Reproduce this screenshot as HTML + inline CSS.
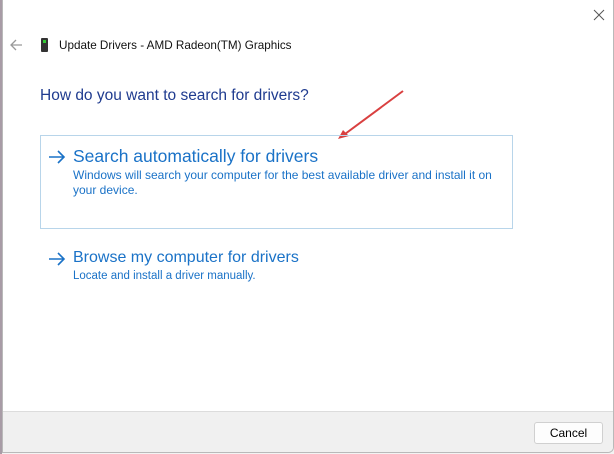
<!DOCTYPE html>
<html><head><style>
body{margin:0;width:614px;height:454px;background:#f3f3f3;position:relative;overflow:hidden;font-family:"Liberation Sans",sans-serif}
.win{position:absolute;left:2px;top:0;width:610px;height:452px;background:#fff;border:1px solid #b9b9b9;border-top:none;border-radius:0 0 6px 0;overflow:hidden}
.t{position:absolute;white-space:nowrap}
.foot{position:absolute;left:0;top:411px;width:610px;height:41px;background:#f0f0f0;border-top:1px solid #dcdcdc}
.btn{position:absolute;left:531px;top:10px;width:67px;height:20px;background:#fdfdfd;border:1px solid #d0d0d0;border-radius:3px;font-size:12px;text-align:center;line-height:20px;color:#000}
.box{position:absolute;left:37px;top:135px;width:471px;height:92px;border:1px solid #b8d5ea}
.lk{color:#1a72c7}
</style></head><body>
<div style="position:absolute;left:0;top:0;width:2px;height:454px;background:#a89ca6"></div>
<div class="win">
<svg style="position:absolute;left:590px;top:9px" width="12" height="12"><path d="M1 1L11 11M11 1L1 11" stroke="#555" stroke-width="1"/></svg>
<svg style="position:absolute;left:6px;top:38px" width="14" height="14"><path d="M13 7H2M7 2L2 7l5 5" stroke="#999" stroke-width="1.3" fill="none"/></svg>
<div style="position:absolute;left:38px;top:38px;width:7px;height:14px;background:#333;border-radius:1px"><div style="position:absolute;left:2px;top:2px;width:3px;height:3px;background:#3c3"></div></div>
<div class="t" style="left:56px;top:39px;font-size:11.7px;color:#111">Update Drivers - AMD Radeon(TM) Graphics</div>
<div class="t" style="left:37px;top:87px;font-size:15.5px;color:#1f3b8f">How do you want to search for drivers?</div>
<svg style="position:absolute;left:0;top:0" width="610" height="160"><line x1="400" y1="91" x2="342" y2="134" stroke="#d94040" stroke-width="2"/><path d="M335 139l5-9 6 6z" fill="#d94040"/></svg>
<div class="box"></div>
<svg style="position:absolute;left:45px;top:150px" width="18" height="14"><path d="M1 7H16M10 1l6 6-6 6" stroke="#1a72c7" stroke-width="1.6" fill="none"/></svg>
<div class="t lk" style="left:70px;top:146px;font-size:17.5px">Search automatically for drivers</div>
<div class="t lk" style="left:70px;top:168px;font-size:12px;line-height:15px">Windows will search your computer for the best available driver and install it on<br>your device.</div>
<svg style="position:absolute;left:45px;top:252px" width="18" height="14"><path d="M1 7H16M10 1l6 6-6 6" stroke="#1a72c7" stroke-width="1.6" fill="none"/></svg>
<div class="t lk" style="left:70px;top:249px;font-size:16px">Browse my computer for drivers</div>
<div class="t lk" style="left:70px;top:270px;font-size:11.5px">Locate and install a driver manually.</div>
<div class="foot"><div class="btn">Cancel</div></div>
</div>
</body></html>
